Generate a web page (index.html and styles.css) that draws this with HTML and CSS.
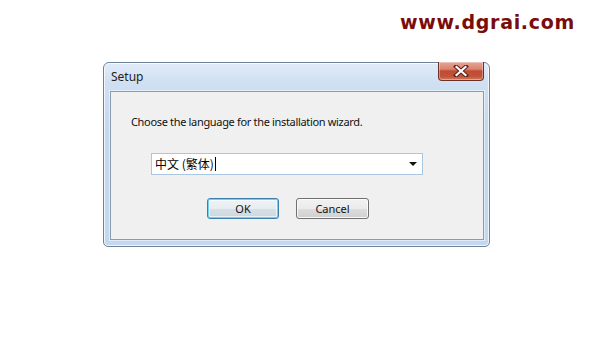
FILE: index.html
```html
<!DOCTYPE html>
<html lang="en">
<head>
<meta charset="utf-8">
<title>Setup</title>
<link rel="stylesheet" href="styles.css">
</head>
<body>
<div class="page">
  <div class="brand">www.dgrai.com</div>
  <div class="window">
    <div class="titlebar">
      <span class="title">Setup</span>
      <div class="close">
        <svg width="16" height="12" viewBox="0 0 16 12">
          <path d="M3 1.5 L13 10.5 M13 1.5 L3 10.5" stroke="#5a1e16" stroke-width="4" stroke-linecap="square"/>
          <path d="M3.5 2 L12.5 10 M12.5 2 L3.5 10" stroke="#ffffff" stroke-width="2.2" stroke-linecap="square"/>
        </svg>
      </div>
    </div>
    <div class="client">
      <p class="prompt">Choose the language for the installation wizard.</p>
      <div class="combo">
        <span class="value">中文 (繁体)</span><span class="caret"></span>
        <span class="arrow"></span>
      </div>
      <div class="buttons">
        <button class="btn btn-default">OK</button>
        <button class="btn">Cancel</button>
      </div>
    </div>
  </div>
</div>
</body>
</html>
```
FILE: styles.css
```css
html, body {
  margin: 0;
  padding: 0;
  background: #ffffff;
}
body {
  width: 600px;
  height: 340px;
  overflow: hidden;
  font-family: "Noto Sans", "Open Sans", "Noto Sans CJK SC", sans-serif;
}
.page {
  display: flex;
  flex-direction: column;
}
.brand {
  height: 45px;
  padding-top: 10px;
  box-sizing: border-box;
  padding-left: 400px;
  font-family: "DejaVu Sans", sans-serif;
  font-weight: bold;
  font-size: 19px;
  letter-spacing: 0.7px;
  color: #7a0c0c;
  line-height: 24px;
}
.window {
  margin-top: 17px;
  margin-left: 103px;
  width: 387px;
  height: 185px;
  box-sizing: border-box;
  border: 1px solid #6f8196;
  border-radius: 6px 6px 5px 5px;
  background: linear-gradient(#e2ecf8 0px, #cfe0f3 20px, #c4d9f0 60px, #c2d8f1 100%);
  box-shadow: inset 0 0 0 1px rgba(255,255,255,0.75);
  display: flex;
  flex-direction: column;
}
.titlebar {
  height: 28px;
  display: flex;
  align-items: flex-start;
  justify-content: space-between;
  padding-left: 7px;
  padding-right: 5px;
}
.title {
  font-size: 12px;
  color: #1e1e1e;
  margin-top: 5px;
}
.close {
  width: 46px;
  height: 19px;
  box-sizing: border-box;
  margin-top: -1px;
  border: 1px solid #6b3127;
  border-top: none;
  border-radius: 0 0 4px 4px;
  background: linear-gradient(#e6a797 0%, #d9826d 40%, #c24a34 50%, #c0533b 80%, #d27d5f 100%);
  box-shadow: inset 0 0 0 1px rgba(255,255,255,0.35);
  display: flex;
  align-items: center;
  justify-content: center;
}
.close svg { display: block; }
.client {
  margin: 0 5px 6px 6px;
  flex: 1;
  background: #f0f0f0;
  border: 1px solid #8a9bb0;
  box-shadow: 0 0 0 1px rgba(255,255,255,0.5);
  display: flex;
  flex-direction: column;
  padding-left: 20px;
}
.prompt {
  margin: 22px 0 0 0;
  font-size: 11px;
  letter-spacing: -0.33px;
  line-height: 16px;
  color: #111;
}
.combo {
  margin-top: 23px;
  margin-left: 20px;
  width: 272px;
  height: 22px;
  box-sizing: border-box;
  border: 1px solid #a9c6e3;
  background: #ffffff;
  display: flex;
  align-items: center;
  padding-left: 3px;
  position: relative;
}
.value {
  font-family: "Noto Sans CJK SC", "Noto Sans", sans-serif;
  font-size: 12px;
  color: #000;
  line-height: 16px;
}
.caret {
  width: 1px;
  height: 14px;
  background: #000;
  margin-left: 1px;
}
.arrow {
  position: absolute;
  right: 5px;
  top: 8px;
  width: 0;
  height: 0;
  border-left: 4px solid transparent;
  border-right: 4px solid transparent;
  border-top: 4px solid #111;
}
.buttons {
  margin-top: 23px;
  margin-left: 76px;
  display: flex;
  gap: 17px;
}
.btn {
  width: 73px;
  height: 21px;
  box-sizing: border-box;
  border: 1px solid #707070;
  border-radius: 3px;
  background: linear-gradient(#f2f2f2 0%, #ebebeb 50%, #dddddd 51%, #cfcfcf 100%);
  box-shadow: inset 0 0 0 1px rgba(255,255,255,0.8);
  font-family: "Noto Sans", sans-serif;
  font-size: 11px;
  color: #111;
  padding: 0;
  line-height: 18px;
}
.btn-default {
  width: 72px;
  border-color: #3c7fb1;
  box-shadow: inset 0 0 0 1px #6fd0f5, inset 0 0 0 2px rgba(255,255,255,0.6);
  background: linear-gradient(#eef3f6 0%, #e6edf1 50%, #d6e0e6 51%, #cbd8df 100%);
}
```
